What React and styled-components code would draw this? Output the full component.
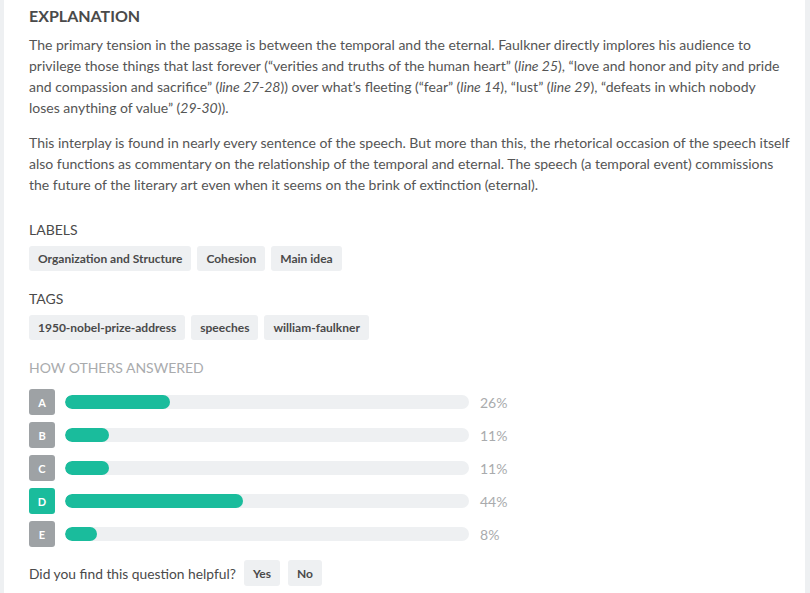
import styled, { createGlobalStyle } from 'styled-components'

const GlobalStyle = createGlobalStyle`
	html, body {
		margin: 0;
		padding: 0;
		background: #ffffff;
	}
	body {
		font-family: Lato, "Open Sans", sans-serif;
		color: #4a4a4a;
	}
`

const Frame = styled.div`
	display: flex;
	width: 810px;
	height: 593px;
	overflow: hidden;
	background: #eef0f2;
`

const Panel = styled.div`
	flex: 1;
	margin: 0 5px 0 4px;
	background: #ffffff;
	padding: 6px 8px 0 25px;
`

const Heading = styled.h2`
	margin: 0;
	font-size: 16px;
	line-height: 20px;
	font-weight: 700;
	color: #4a4a4a;
`

const Para = styled.p`
	margin: ${p => (p.$first ? '8px' : '14px')} 0 0;
	font-size: 14px;
	line-height: 21px;
	color: #555555;
	white-space: nowrap;
	em {
		font-style: italic;
	}
`

const SectionTitle = styled.div`
	margin-top: ${p => p.$top || 19}px;
	font-size: 14px;
	line-height: 18px;
	text-transform: uppercase;
	color: ${p => (p.$muted ? '#a9abad' : '#4a4a4a')};
`

const ChipRow = styled.div`
	display: flex;
	gap: 6px;
	margin-top: 7px;
`

const Chip = styled.span`
	display: inline-flex;
	align-items: center;
	height: 25px;
	padding: 0 9px;
	border-radius: 3px;
	background: #eef0f2;
	font-size: 12px;
	font-weight: 700;
	color: #4a4a4a;
`

const Answers = styled.div`
	display: flex;
	flex-direction: column;
	gap: 7px;
	margin-top: 12px;
`

const AnswerRow = styled.div`
	display: flex;
	align-items: center;
	height: 26px;
`

const Letter = styled.div`
	width: 26px;
	height: 26px;
	border-radius: 3px;
	background: ${p => (p.$correct ? '#1abc9c' : '#9ea2a5')};
	color: #ffffff;
	font-size: 11px;
	font-weight: 700;
	display: flex;
	align-items: center;
	justify-content: center;
`

const Track = styled.div`
	margin-left: 10px;
	width: 404px;
	height: 14px;
	border-radius: 7px;
	background: #eef0f2;
	overflow: hidden;
`

const Fill = styled.div`
	height: 100%;
	border-radius: 7px;
	background: #1abc9c;
`

const Percent = styled.span`
	margin-left: 11px;
	font-size: 14px;
	color: #a9abad;
`

const Helpful = styled.div`
	display: flex;
	align-items: center;
	gap: 8px;
	margin-top: 13px;
	font-size: 13.8px;
	color: #4a4a4a;
`

const Vote = styled.button`
	height: 26px;
	padding: 0 9px;
	border: 0;
	border-radius: 3px;
	background: #eef0f2;
	font-family: Lato, sans-serif;
	font-size: 12px;
	font-weight: 700;
	color: #4a4a4a;
`

const answers = [
	{ letter: 'A', pct: 26 },
	{ letter: 'B', pct: 11 },
	{ letter: 'C', pct: 11 },
	{ letter: 'D', pct: 44, correct: true },
	{ letter: 'E', pct: 8 },
]

export default function App() {
	return (
		<>
			<GlobalStyle />
			<Frame>
				<Panel>
					<Heading>EXPLANATION</Heading>
					<Para $first>
						The primary tension in the passage is between the temporal and the eternal. Faulkner directly implores his audience to<br />
						privilege those things that last forever (“verities and truths of the human heart” (<em>line 25</em>), “love and honor and pity and pride<br />
						and compassion and sacrifice” (<em>line 27-28</em>)) over what’s fleeting (“fear” (<em>line 14</em>), “lust” (<em>line 29</em>), “defeats in which nobody<br />
						loses anything of value” (<em>29-30</em>)).
					</Para>
					<Para>
						This interplay is found in nearly every sentence of the speech. But more than this, the rhetorical occasion of the speech itself<br />
						also functions as commentary on the relationship of the temporal and eternal. The speech (a temporal event) commissions<br />
						the future of the literary art even when it seems on the brink of extinction (eternal).
					</Para>

					<SectionTitle $top={26}>Labels</SectionTitle>
					<ChipRow>
						<Chip>Organization and Structure</Chip>
						<Chip>Cohesion</Chip>
						<Chip>Main idea</Chip>
					</ChipRow>

					<SectionTitle>Tags</SectionTitle>
					<ChipRow>
						<Chip>1950-nobel-prize-address</Chip>
						<Chip>speeches</Chip>
						<Chip>william-faulkner</Chip>
					</ChipRow>

					<SectionTitle $muted>How others answered</SectionTitle>
					<Answers>
						{answers.map(a => (
							<AnswerRow key={a.letter}>
								<Letter $correct={a.correct}>{a.letter}</Letter>
								<Track>
									<Fill style={{ width: `${a.pct}%` }} />
								</Track>
								<Percent>{a.pct}%</Percent>
							</AnswerRow>
						))}
					</Answers>

					<Helpful>
						<span>Did you find this question helpful?</span>
						<Vote>Yes</Vote>
						<Vote>No</Vote>
					</Helpful>
				</Panel>
			</Frame>
		</>
	)
}
